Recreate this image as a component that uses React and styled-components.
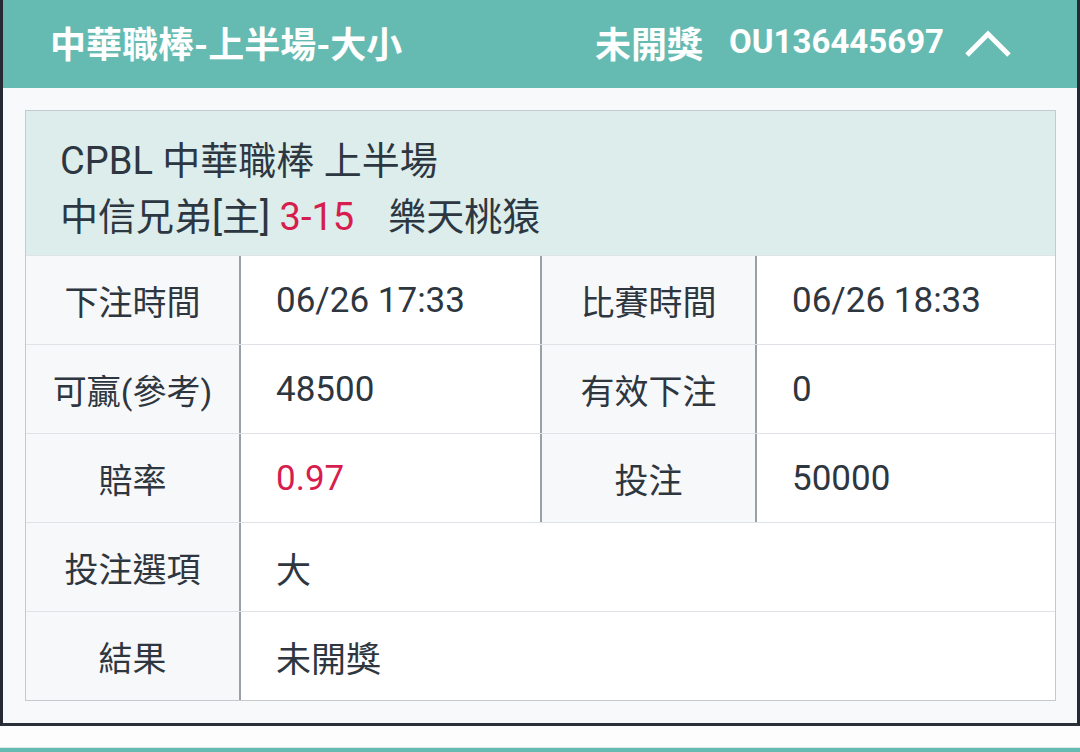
import React from 'react';
import styled, { createGlobalStyle } from 'styled-components';

const GlobalStyle = createGlobalStyle`
  html, body {
    margin: 0;
    padding: 0;
    background: #fdfdfd;
  }
  body {
    font-family: Roboto, "Noto Sans CJK TC", sans-serif;
    color: #2e3640;
  }
  * { box-sizing: border-box; }
`;

const Card = styled.div`
  width: 1080px;
  border-left: 3px solid #262b33;
  border-right: 3px solid #262b33;
  border-bottom: 3px solid #2b3038;
  background: #f8f9fa;
`;

const Header = styled.div`
  height: 88px;
  background: #65bbb1;
  color: #fff;
  display: flex;
  align-items: center;
  justify-content: space-between;
  padding: 0 66px 5px 47px;
  font-weight: 700;
  font-size: 36px;
`;

const HeaderRight = styled.div`
  display: flex;
  align-items: center;
  gap: 26px;
`;

const OrderNo = styled.span`
  font-size: 33px;
`;

const Chevron = () => (
  <svg width="46" height="28" viewBox="0 0 46 28" style={{ marginLeft: -5, marginTop: 4 }}>
    <polyline points="2,25 23,4 44,25" fill="none" stroke="#fff" strokeWidth="5" strokeLinecap="butt" />
  </svg>
);

const Body = styled.div`
  padding: 22px 21px 22px 22px;
`;

const Table = styled.div`
  border: 1px solid #c5cacf;
  background: #fff;
`;

const Summary = styled.div`
  background: #dcedeb;
  padding: 22px 34px 10px;
  font-size: 38px;
  line-height: 56px;
  color: #2d3742;
`;

const Red = styled.span`
  color: #d71d4e;
`;

const Gap = styled.span`
  display: inline-block;
  width: ${p => p.w}px;
`;

const Row = styled.div`
  display: grid;
  grid-template-columns: 215px 299px 217px 1fr;
  height: 89px;
  border-top: 1px solid #dfe2e6;
  font-size: 35px;
`;

const Label = styled.div`
  background: #f7f8fa;
  display: flex;
  align-items: center;
  justify-content: center;
  font-size: 34px;
  border-left: ${p => (p.divider ? '2px solid #9aa0a8' : 'none')};
  border-right: 2px solid #9aa0a8;
`;

const Value = styled.div`
  display: flex;
  align-items: center;
  padding-left: 35px;
  color: ${p => (p.red ? '#d71d4e' : 'inherit')};
  grid-column: ${p => (p.wide ? 'span 3' : 'auto')};
`;

const NextCard = styled.div`
  margin-top: 21px;
  height: 6px;
  border-top: 1px solid #d9ecea;
  background: #65bbb1;
`;

export default function App() {
  return (
    <>
      <GlobalStyle />
      <Card>
        <Header>
          <span>中華職棒-上半場-大小</span>
          <HeaderRight>
            <span>未開獎</span>
            <OrderNo>OU136445697</OrderNo>
            <Chevron />
          </HeaderRight>
        </Header>
        <Body>
          <Table>
            <Summary>
              <div>CPBL 中華職棒 上半場</div>
              <div>
                中信兄弟[主] <Red>3-15</Red>
                <Gap w={34} />
                樂天桃猿
              </div>
            </Summary>
            <Row>
              <Label>下注時間</Label>
              <Value>06/26 17:33</Value>
              <Label divider>比賽時間</Label>
              <Value>06/26 18:33</Value>
            </Row>
            <Row>
              <Label>可贏(參考)</Label>
              <Value>48500</Value>
              <Label divider>有效下注</Label>
              <Value>0</Value>
            </Row>
            <Row>
              <Label>賠率</Label>
              <Value red>0.97</Value>
              <Label divider>投注</Label>
              <Value>50000</Value>
            </Row>
            <Row>
              <Label>投注選項</Label>
              <Value wide>大</Value>
            </Row>
            <Row>
              <Label>結果</Label>
              <Value wide>未開獎</Value>
            </Row>
          </Table>
        </Body>
      </Card>
      <NextCard />
    </>
  );
}
